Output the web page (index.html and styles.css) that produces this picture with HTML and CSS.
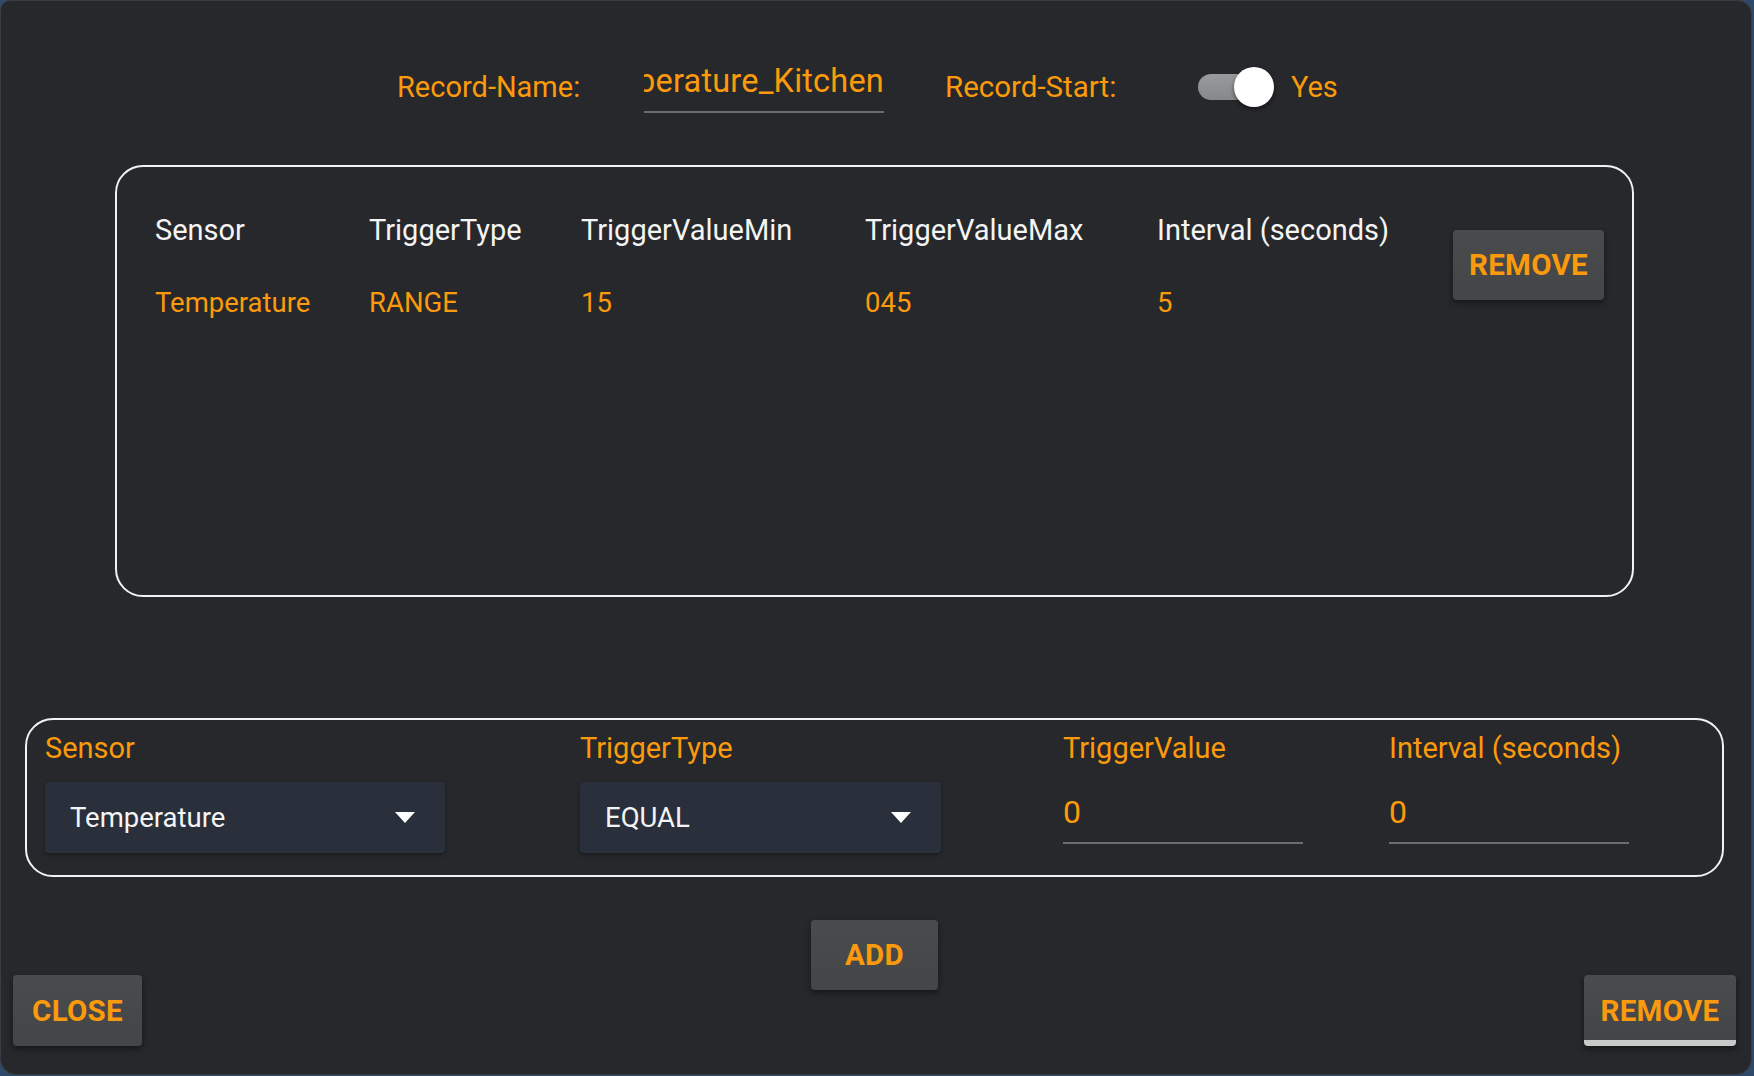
FILE: index.html
```html
<!DOCTYPE html>
<html>
<head>
<meta charset="utf-8">
<link rel="stylesheet" href="styles.css">
</head>
<body>
<div class="window">
  <div class="top-row">
    <span class="top-label name-label">Record-Name:</span>
    <div class="name-field"><span>Temperature_Kitchen</span></div>
    <span class="top-label start-label">Record-Start:</span>
    <div class="toggle"><div class="track"></div><div class="thumb"></div></div>
    <span class="yes">Yes</span>
  </div>

  <div class="table-box">
    <div class="table">
      <div class="th">Sensor</div>
      <div class="th">TriggerType</div>
      <div class="th">TriggerValueMin</div>
      <div class="th">TriggerValueMax</div>
      <div class="th">Interval (seconds)</div>
      <div class="td">Temperature</div>
      <div class="td">RANGE</div>
      <div class="td">15</div>
      <div class="td">045</div>
      <div class="td">5</div>
    </div>
    <button class="btn btn-remove-row">REMOVE</button>
  </div>

  <div class="form-box">
    <div class="field f1">
      <div class="flabel">Sensor</div>
      <div class="select s1"><span>Temperature</span><span class="arrow"></span></div>
    </div>
    <div class="field f2">
      <div class="flabel">TriggerType</div>
      <div class="select s2"><span>EQUAL</span><span class="arrow"></span></div>
    </div>
    <div class="field f3">
      <div class="flabel">TriggerValue</div>
      <div class="tfield">0</div>
    </div>
    <div class="field f4">
      <div class="flabel">Interval (seconds)</div>
      <div class="tfield">0</div>
    </div>
  </div>

  <div class="bottom">
    <button class="btn btn-close">CLOSE</button>
    <button class="btn btn-add">ADD</button>
    <button class="btn btn-remove focused">REMOVE</button>
  </div>
</div>
</body>
</html>
```

FILE: styles.css
```css
* { box-sizing: border-box; }
html, body {
  margin: 0;
  padding: 0;
  width: 1754px;
  height: 1076px;
  background: #2d4a6b;
  overflow: hidden;
}
body {
  font-family: Roboto, "Liberation Sans", sans-serif;
}
.window {
  width: 1752px;
  height: 1075px;
  background: #27282b;
  border-radius: 10px 14px 16px 16px;
  border: 1px solid #3b3c40;
  display: flex;
  flex-direction: column;
  position: relative;
}
.top-row {
  display: flex;
  align-items: center;
  height: 106px;
  padding-top: 66px;
  padding-left: 396px;
}
.top-label {
  color: #fb9a0c;
  font-size: 29px;
  white-space: nowrap;
}
.name-label { width: 247px; }
.name-field {
  width: 240px;
  height: 48px;
  border-bottom: 2px solid #6b6c6f;
  overflow: hidden;
  display: flex;
  justify-content: flex-end;
  align-items: flex-start;
  color: #fb9a0c;
  font-size: 32.5px;
  letter-spacing: 0.2px;
  white-space: nowrap;
  margin-top: 4px;
}
.name-field span { flex: none; line-height: 32px; }
.start-label { margin-left: 61px; width: 253px; font-size: 29.5px; }
.toggle {
  position: relative;
  width: 76px;
  height: 40px;
}
.track {
  position: absolute;
  left: 0;
  top: 7px;
  width: 68px;
  height: 26px;
  border-radius: 13px;
  background: linear-gradient(#9a9b9d, #86878a);
}
.thumb {
  position: absolute;
  left: 36px;
  top: 0;
  width: 40px;
  height: 40px;
  border-radius: 50%;
  background: #ffffff;
  box-shadow: 0 2px 4px rgba(0,0,0,0.5);
}
.yes {
  color: #fb9a0c;
  font-size: 29px;
  margin-left: 17px;
}

.table-box {
  position: relative;
  margin: 58px 0 0 114px;
  width: 1519px;
  height: 432px;
  border: 2px solid #f2f2f2;
  border-radius: 28px;
  padding: 48px 0 0 38px;
}
.table {
  display: grid;
  grid-template-columns: 214px 212px 284px 292px 280px;
  grid-auto-rows: 30px;
  row-gap: 43px;
  line-height: 30px;
  white-space: nowrap;
}
.th { color: #f4f4f4; font-size: 29px; }
.td { color: #fb9a0c; font-size: 27.5px; }

.btn {
  font-family: Roboto, "Liberation Sans", sans-serif;
  font-weight: 700;
  font-size: 29.5px;
  color: #fb9a0c;
  background: linear-gradient(#4a4b4d, #444547);
  border: none;
  border-radius: 4px;
  box-shadow: 0 3px 6px rgba(0,0,0,0.45);
  height: 71px;
  padding: 0;
  letter-spacing: 0.3px;
}
.btn-remove-row {
  position: absolute;
  right: 28px;
  top: 63px;
  width: 151px;
  height: 70px;
}

.form-box {
  margin: 121px 0 0 24px;
  width: 1699px;
  height: 159px;
  border: 2px solid #f2f2f2;
  border-radius: 28px;
  padding: 12px 0 0 18px;
  display: grid;
  grid-template-columns: 535px 483px 326px 300px;
}
.flabel {
  color: #fb9a0c;
  font-size: 29px;
  line-height: 32px;
  white-space: nowrap;
}
.select {
  margin-top: 18px;
  height: 71px;
  background: #29303b;
  border-radius: 4px;
  box-shadow: 0 2px 4px rgba(0,0,0,0.35);
  display: flex;
  align-items: center;
  justify-content: space-between;
  padding: 0 30px 0 25px;
  color: #f4f4f4;
  font-size: 27.5px;
}
.s1 { width: 400px; }
.s2 { width: 361px; }
.arrow {
  width: 0;
  height: 0;
  border-left: 10px solid transparent;
  border-right: 10px solid transparent;
  border-top: 11px solid #ffffff;
}
.tfield {
  margin-top: 14px;
  width: 240px;
  height: 66px;
  border-bottom: 2px solid #6b6c6f;
  color: #fb9a0c;
  font-size: 32px;
  line-height: 68px;
}

.bottom {
  flex: 1;
  display: grid;
  grid-template-columns: 1fr auto 1fr;
  padding: 43px 15px 28px 12px;
}
.btn-close {
  width: 129px;
  align-self: end;
  justify-self: start;
}
.btn-add {
  width: 127px;
  height: 70px;
  align-self: start;
}
.btn-remove {
  width: 152px;
  align-self: end;
  justify-self: end;
}
.focused {
  border-bottom: 6px solid #c8c9c9;
  padding-top: 6px;
}
```
